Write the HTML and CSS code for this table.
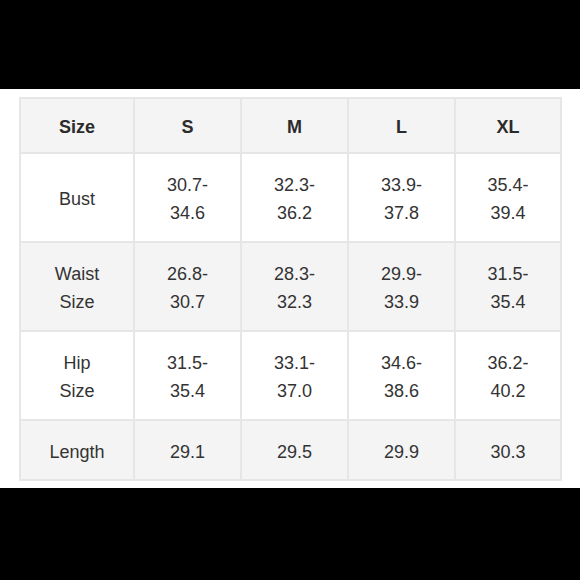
FILE: index.html
```html
<!DOCTYPE html>
<html>
<head>
<meta charset="utf-8">
<link rel="stylesheet" href="styles.css">
</head>
<body>
<div class="panel">
  <div class="chart">
    <div class="cell head">Size</div>
    <div class="cell head">S</div>
    <div class="cell head">M</div>
    <div class="cell head">L</div>
    <div class="cell head">XL</div>

    <div class="cell">Bust</div>
    <div class="cell">30.7-<br>34.6</div>
    <div class="cell">32.3-<br>36.2</div>
    <div class="cell">33.9-<br>37.8</div>
    <div class="cell">35.4-<br>39.4</div>

    <div class="cell alt">Waist<br>Size</div>
    <div class="cell alt">26.8-<br>30.7</div>
    <div class="cell alt">28.3-<br>32.3</div>
    <div class="cell alt">29.9-<br>33.9</div>
    <div class="cell alt">31.5-<br>35.4</div>

    <div class="cell">Hip<br>Size</div>
    <div class="cell">31.5-<br>35.4</div>
    <div class="cell">33.1-<br>37.0</div>
    <div class="cell">34.6-<br>38.6</div>
    <div class="cell">36.2-<br>40.2</div>

    <div class="cell alt">Length</div>
    <div class="cell alt">29.1</div>
    <div class="cell alt">29.5</div>
    <div class="cell alt">29.9</div>
    <div class="cell alt">30.3</div>
  </div>
</div>
</body>
</html>
```

FILE: styles.css
```css
html, body {
  margin: 0;
  padding: 0;
  background: #000;
}
body {
  width: 580px;
  height: 580px;
  font-family: "Liberation Sans", Arial, sans-serif;
}
.panel {
  margin-top: 89px;
  height: 399px;
  background: #fff;
  padding-top: 8px;
  box-sizing: border-box;
}
.chart {
  margin-left: 19px;
  width: 543px;
  display: grid;
  grid-template-columns: 114px 107px 107px 107px 106px;
  grid-template-rows: 55px 89px 89px 89px 60px;
  border-left: 2px solid #e6e6e6;
  border-top: 2px solid #e6e6e6;
  box-sizing: border-box;
}
.cell {
  box-sizing: border-box;
  border-right: 2px solid #e6e6e6;
  border-bottom: 2px solid #e6e6e6;
  padding-top: 3px;
  display: flex;
  align-items: center;
  justify-content: center;
  text-align: center;
  font-size: 18px;
  line-height: 28px;
  color: #333;
  background: #fff;
}
.head {
  background: #f4f4f4;
  font-weight: bold;
  color: #2b2b2b;
}
.alt {
  background: #f4f4f4;
}
```
